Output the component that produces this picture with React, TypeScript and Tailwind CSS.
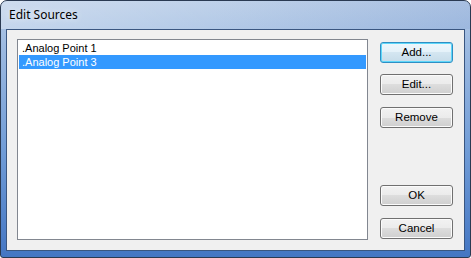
import { useState } from 'react'

const items = ['.Analog Point 1', '.Analog Point 3']

const btnBase =
  'h-[21px] w-[73px] rounded-[3px] text-[11px] leading-none text-black flex items-center justify-center'
const btnNormal =
  'border border-[#707070] bg-[linear-gradient(to_bottom,#f2f2f2_0%,#ebebeb_50%,#dddddd_50%,#cfcfcf_100%)] shadow-[inset_0_0_0_1px_#fbfbfb]'
const btnDefault =
  'border border-[#2f8fc4] bg-[linear-gradient(to_bottom,#eef7fc_0%,#e4f1f9_50%,#d4e6f1_50%,#c6dce9_100%)] shadow-[inset_0_0_0_1px_#5ed7fa]'

function DlgButton({ label, isDefault = false }: { label: string; isDefault?: boolean }) {
  return (
    <button className={`${btnBase} ${isDefault ? btnDefault : btnNormal}`}>
      <span className="font-['Liberation_Sans',sans-serif] text-[11.5px]">{label}</span>
    </button>
  )
}

export default function App() {
  const [selected, setSelected] = useState(1)

  return (
    <div className="w-[471px] h-[258px] bg-white">
      <div className="w-[471px] h-[258px] flex flex-col rounded-t-[7px] rounded-b-[3px] border border-[#2a3a52] bg-[linear-gradient(to_bottom,#b4cae6_0%,#9ab8e0_20%,#6f9bd6_60%,#4476c3_100%)] overflow-hidden">
        {/* title bar */}
        <div className="h-[28px] flex items-center pl-[8px] pb-[1px] bg-[linear-gradient(to_right,rgba(255,255,255,0.35)_0%,rgba(255,255,255,0.15)_45%,rgba(120,150,205,0.2)_100%)]">
          <span className="font-['Noto_Sans',sans-serif] text-[12px] text-black [text-shadow:0_0_6px_rgba(255,255,255,0.9)]">
            Edit Sources
          </span>
        </div>

        {/* client area */}
        <div className="flex-1 mx-[5px] mb-[6px] border border-[#3a5680] bg-[#f0f0f0] flex pl-[10px] pt-[9px] pr-[11px]">
          <div className="w-[351px] h-[201px] border border-[#828790] bg-white p-[1px] font-['Liberation_Sans',sans-serif] text-[11px]">
            {items.map((item, i) => (
              <div
                key={item}
                onClick={() => setSelected(i)}
                className={`h-[14px] leading-[14px] pl-[3px] ${
                  selected === i ? 'bg-[#3399ff] text-white' : 'text-black'
                }`}
              >
                {item}
              </div>
            ))}
          </div>

          <div className="ml-[12px] flex flex-col pt-[3px]">
            <DlgButton label="Add..." isDefault />
            <div className="mt-[11px]">
              <DlgButton label="Edit..." />
            </div>
            <div className="mt-[12px]">
              <DlgButton label="Remove" />
            </div>
            <div className="mt-[57px]">
              <DlgButton label="OK" />
            </div>
            <div className="mt-[12px]">
              <DlgButton label="Cancel" />
            </div>
          </div>
        </div>
      </div>
    </div>
  )
}
